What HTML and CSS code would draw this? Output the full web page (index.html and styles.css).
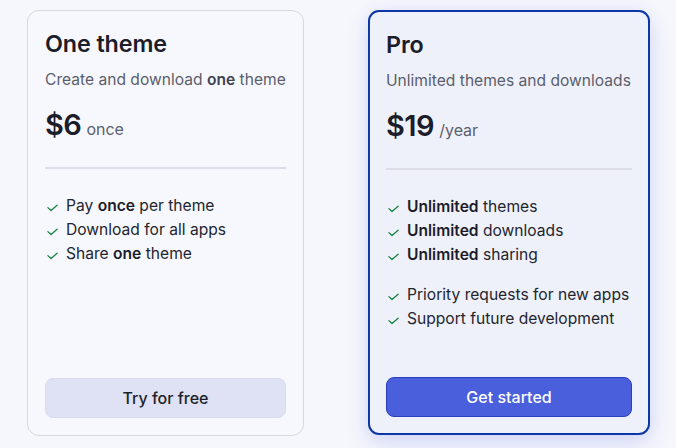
FILE: index.html
```html
<!DOCTYPE html>
<html lang="en">
<head>
<meta charset="utf-8">
<title>Pricing</title>
<link rel="stylesheet" href="styles.css">
</head>
<body>
<main class="plans">
  <section class="card">
    <h2 class="title">One theme</h2>
    <p class="sub">Create and download <b>one</b> theme</p>
    <p class="price"><span class="amount">$6</span><span class="per">once</span></p>
    <hr class="divider">
    <ul class="features">
      <li><svg class="check" viewBox="0 0 12 8"><path d="M1 3.6 L4.4 6.8 L11 1"/></svg><span>Pay <b>once</b> per theme</span></li>
      <li><svg class="check" viewBox="0 0 12 8"><path d="M1 3.6 L4.4 6.8 L11 1"/></svg><span>Download for all apps</span></li>
      <li><svg class="check" viewBox="0 0 12 8"><path d="M1 3.6 L4.4 6.8 L11 1"/></svg><span>Share <b>one</b> theme</span></li>
    </ul>
    <button class="btn btn-light">Try for free</button>
  </section>
  <section class="card card-pro">
    <h2 class="title">Pro</h2>
    <p class="sub">Unlimited themes and downloads</p>
    <p class="price"><span class="amount">$19</span><span class="per">/year</span></p>
    <hr class="divider">
    <ul class="features">
      <li><svg class="check" viewBox="0 0 12 8"><path d="M1 3.6 L4.4 6.8 L11 1"/></svg><span><b>Unlimited</b> themes</span></li>
      <li><svg class="check" viewBox="0 0 12 8"><path d="M1 3.6 L4.4 6.8 L11 1"/></svg><span><b>Unlimited</b> downloads</span></li>
      <li><svg class="check" viewBox="0 0 12 8"><path d="M1 3.6 L4.4 6.8 L11 1"/></svg><span><b>Unlimited</b> sharing</span></li>
    </ul>
    <ul class="features features-extra">
      <li><svg class="check" viewBox="0 0 12 8"><path d="M1 3.6 L4.4 6.8 L11 1"/></svg><span>Priority requests for new apps</span></li>
      <li><svg class="check" viewBox="0 0 12 8"><path d="M1 3.6 L4.4 6.8 L11 1"/></svg><span>Support future development</span></li>
    </ul>
    <button class="btn btn-primary">Get started</button>
  </section>
</main>
</body>
</html>
```

FILE: styles.css
```css
* { box-sizing: border-box; }

html, body {
  margin: 0;
  height: 100%;
}

body {
  background: #f6f7fc;
  font-family: Inter, "Noto Sans", "Liberation Sans", sans-serif;
  color: #1d1f2b;
  overflow: hidden;
}

.plans {
  display: grid;
  grid-template-columns: 277px 282px;
  column-gap: 64px;
  padding: 10px 0 0 27px;
}

.card {
  display: flex;
  flex-direction: column;
  height: 426px;
  padding: 19px 17px 17px;
  background: #f7f8fd;
  border: 1px solid #d7d8e0;
  border-radius: 12px;
}

.card-pro {
  height: 425px;
  padding: 19px 16px 16px;
  background: #eff1fa;
  border: 2px solid #0c37a6;
  border-radius: 11px;
  box-shadow: 0 10px 24px rgba(70, 90, 225, 0.16), 0 0 14px rgba(70, 90, 225, 0.08);
}

.title {
  margin: 0;
  font-size: 23.3px;
  line-height: 28px;
  font-weight: 600;
  color: #1b1d2a;
  letter-spacing: -0.1px;
}

.sub {
  margin: 10px 0 0;
  font-size: 15.6px;
  line-height: 24px;
  color: #5b5e6c;
  white-space: nowrap;
}

.sub b {
  font-weight: 600;
  color: #3f4250;
}

.price {
  margin: 15px 0 0;
  display: flex;
  align-items: baseline;
  gap: 5px;
  line-height: 36px;
}

.amount {
  font-size: 29px;
  font-weight: 600;
  color: #1b1d2a;
  letter-spacing: -0.5px;
}

.per {
  font-size: 16px;
  color: #5b5e6c;
}

.divider {
  margin: 20px 0 0;
  border: 0;
  height: 2px;
  background: #dcdde9;
}

.features {
  list-style: none;
  margin: 25px 0 0;
  padding: 0;
}

.features-extra {
  margin-top: 16px;
}

.features li {
  display: flex;
  align-items: center;
  gap: 8px;
  padding-left: 2px;
  font-size: 15.6px;
  line-height: 24px;
  color: #23252f;
  white-space: nowrap;
}

.features b {
  font-weight: 600;
  color: #1b1d2a;
}

.check {
  width: 11px;
  height: 8px;
  margin-top: 3px;
  flex: none;
  fill: none;
  stroke: #13843f;
  stroke-width: 1.4;
  stroke-linecap: round;
  stroke-linejoin: round;
}

.btn {
  margin-top: auto;
  height: 40px;
  border-radius: 8px;
  font-family: inherit;
  font-size: 16px;
  font-weight: 500;
  cursor: pointer;
}

.btn-light {
  background: #dfe1f4;
  border: 1px solid #d9dbf0;
  color: #1d1f2b;
}

.btn-primary {
  background: #4a5fdc;
  border: 1px solid #2b3fbd;
  color: #ffffff;
}
```
